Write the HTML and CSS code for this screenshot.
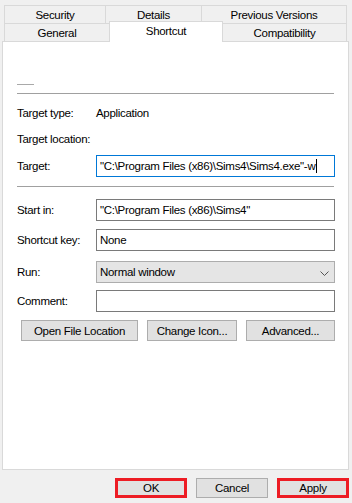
FILE: index.html
```html
<!DOCTYPE html>
<html>
<head>
<title>Sims4 Properties</title>
<link rel="stylesheet" href="styles.css">
</head>
<body>
<div id="dialog">
  <div class="tabs">
    <ul class="tab-row">
      <li class="tab w-security">Security</li>
      <li class="tab w-details">Details</li>
      <li class="tab w-previous">Previous Versions</li>
    </ul>
    <ul class="tab-row">
      <li class="tab w-general">General</li>
      <li class="tab w-shortcut active">Shortcut</li>
      <li class="tab w-compat">Compatibility</li>
    </ul>
  </div>
  <div class="panel">
    <div class="name-line"></div>
    <hr class="sep first">
    <div class="row info r-type"><span class="label">Target type:</span><span class="value">Application</span></div>
    <div class="row info r-location"><span class="label">Target location:</span></div>
    <div class="row r-target">
      <span class="label">Target:</span>
      <div class="field focused">"C:\Program Files (x86)\Sims4\Sims4.exe"-w<span class="caret"></span></div>
    </div>
    <hr class="sep second">
    <div class="row r-start">
      <span class="label">Start in:</span>
      <div class="field">"C:\Program Files (x86)\Sims4"</div>
    </div>
    <div class="row r-key">
      <span class="label">Shortcut key:</span>
      <div class="field">None</div>
    </div>
    <div class="row r-run">
      <span class="label">Run:</span>
      <div class="field select">Normal window
        <svg class="chevron" width="9" height="5" viewBox="0 0 9 5"><path d="M0.5 0.5 L4.5 4.5 L8.5 0.5" fill="none" stroke="#555" stroke-width="1"/></svg>
      </div>
    </div>
    <div class="row r-comment">
      <span class="label">Comment:</span>
      <div class="field"></div>
    </div>
    <div class="actions">
      <button class="btn b-open">Open File Location</button>
      <button class="btn b-icon">Change Icon...</button>
      <button class="btn b-adv">Advanced...</button>
    </div>
  </div>
  <div class="footer">
    <button class="btn dlg marked">OK</button>
    <button class="btn dlg">Cancel</button>
    <button class="btn dlg marked">Apply</button>
  </div>
</div>
</body>
</html>
```

FILE: styles.css
```css
body, div, ul, li, span, hr, button {
  margin: 0;
  padding: 0;
  border: none;
  list-style: none;
  box-sizing: border-box;
}
body {
  background: #f0f0f0;
  font-family: 'Liberation Sans', Arial, sans-serif;
  font-size: 11.5px;
  letter-spacing: -0.3px;
  color: #000;
}
#dialog {
  width: 352px;
  height: 503px;
  overflow: hidden;
}

/* tabs */
.tabs {
  padding: 5px 0 0 4px;
}
.tab-row {
  display: flex;
  height: 18px;
}
.tab {
  height: 18px;
  line-height: 19px;
  text-align: center;
  background: #f0f0f0;
  border: 1px solid #d9d9d9;
  border-bottom: none;
  margin-left: -1px;
}
.tab:first-child { margin-left: 0; }
.w-security { width: 102px; }
.w-details { width: 97px; }
.w-previous { width: 146px; }
.w-general { width: 106px; }
.w-shortcut { width: 114px; }
.w-compat { width: 125px; }
.tab.active {
  background: #fff;
  height: 21px;
  margin-top: -2px;
  line-height: 19px;
  position: relative;
  z-index: 2;
}

/* panel */
.panel {
  width: 347px;
  height: 429px;
  margin-left: 2px;
  background: #fff;
  border: 1px solid #d9d9d9;
  padding: 0 13px 0 14px;
}
.name-line {
  width: 17px;
  height: 1px;
  background: #a9a9a9;
  margin-top: 42px;
}
.sep {
  height: 1px;
  width: 317px;
  background: #a0a0a0;
}
.sep.first { margin-top: 8px; }
.sep.second { margin-top: 9px; }

.row {
  display: flex;
  align-items: center;
  height: 22px;
}
.label {
  width: 79px;
  flex: none;
}
.r-type { margin-top: 8px; }
.r-location { margin-top: 4px; }
.r-target { margin-top: 5px; }
.r-start { margin-top: 12px; }
.r-key { margin-top: 8px; }
.r-run { margin-top: 10px; }
.r-comment { margin-top: 7px; }

.field {
  width: 239px;
  height: 22px;
  border: 1px solid #7a7a7a;
  padding-left: 3px;
  line-height: 20px;
  white-space: nowrap;
  display: flex;
  align-items: center;
}
.field.focused {
  border-color: #0078d7;
}
.caret {
  display: inline-block;
  width: 1px;
  height: 14px;
  background: #000;
  margin-left: 1px;
}
.field.select {
  background: #e5e5e5;
  border-color: #adadad;
  position: relative;
}
.chevron {
  position: absolute;
  right: 5px;
  top: 9px;
}

.actions {
  display: flex;
  gap: 9px;
  margin-top: 8px;
  padding-left: 4px;
}
.btn {
  height: 21px;
  background: #e1e1e1;
  border: 1px solid #adadad;
  font-family: inherit;
  font-size: 11.5px;
  letter-spacing: -0.3px;
  color: #000;
}
.b-open { width: 117px; }
.b-icon { width: 90px; }
.b-adv { width: 89px; }

/* dialog buttons */
.footer {
  display: flex;
  gap: 9px;
  padding: 8px 0 0 115px;
}
.btn.dlg {
  width: 72px;
  height: 20px;
}
.btn.marked {
  border: 3px solid #ed1c24;
}
```
